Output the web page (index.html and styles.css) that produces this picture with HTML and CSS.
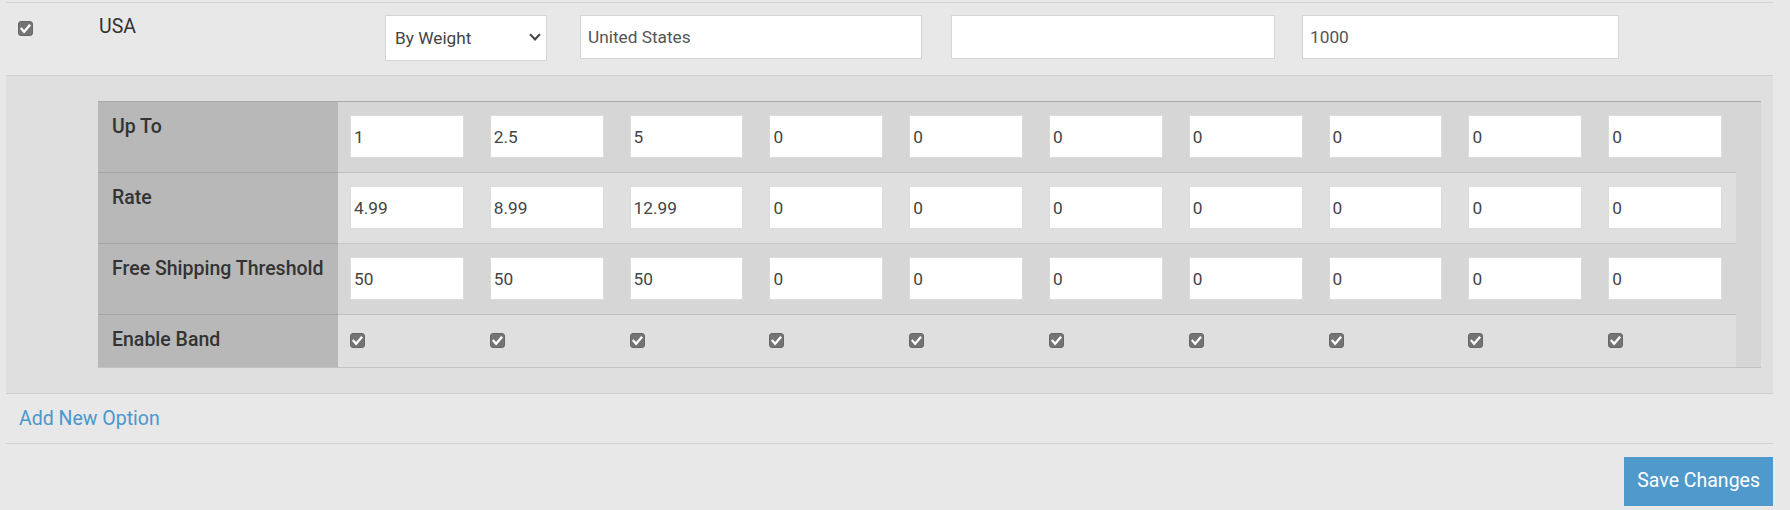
FILE: index.html
```html
<!DOCTYPE html>
<html lang="en">
<head>
<meta charset="utf-8">
<title>Shipping Zones</title>
<link rel="stylesheet" href="styles.css">
</head>
<body>
<div class="wrap">

  <div class="zone-row">
    <div class="zone-cell">
      <svg class="cb cb-top" viewBox="0 0 15 15"><rect x=".5" y=".5" width="14" height="14" rx="2.5"/><path d="M3.6 7.9l2.5 2.9 5.3-6.2"/></svg>
    </div>
    <div class="zone-cell zone-name">USA</div>
    <div class="zone-cell">
      <div class="sel">
        <select><option>By Weight</option><option>By Price</option></select>
      </div>
    </div>
    <div class="zone-cell"><input class="fld fld-name" type="text" value="United States"></div>
    <div class="zone-cell"><input class="fld fld-code" type="text" value=""></div>
    <div class="zone-cell"><input class="fld fld-max" type="text" value="1000"></div>
  </div>

  <div class="bands">
    <div class="band-wrap">
      <table class="band">
        <colgroup><col class="c-head"><col span="10"></colgroup>
        <tr>
          <th>Up To</th>
          <td><input type="text" value="1"></td>
          <td><input type="text" value="2.5"></td>
          <td><input type="text" value="5"></td>
          <td><input type="text" value="0"></td>
          <td><input type="text" value="0"></td>
          <td><input type="text" value="0"></td>
          <td><input type="text" value="0"></td>
          <td><input type="text" value="0"></td>
          <td><input type="text" value="0"></td>
          <td><input type="text" value="0"></td>
        </tr>
        <tr>
          <th>Rate</th>
          <td><input type="text" value="4.99"></td>
          <td><input type="text" value="8.99"></td>
          <td><input type="text" value="12.99"></td>
          <td><input type="text" value="0"></td>
          <td><input type="text" value="0"></td>
          <td><input type="text" value="0"></td>
          <td><input type="text" value="0"></td>
          <td><input type="text" value="0"></td>
          <td><input type="text" value="0"></td>
          <td><input type="text" value="0"></td>
        </tr>
        <tr>
          <th>Free Shipping Threshold</th>
          <td><input type="text" value="50"></td>
          <td><input type="text" value="50"></td>
          <td><input type="text" value="50"></td>
          <td><input type="text" value="0"></td>
          <td><input type="text" value="0"></td>
          <td><input type="text" value="0"></td>
          <td><input type="text" value="0"></td>
          <td><input type="text" value="0"></td>
          <td><input type="text" value="0"></td>
          <td><input type="text" value="0"></td>
        </tr>
        <tr>
          <th>Enable Band</th>
          <td><svg class="cb" viewBox="0 0 15 15"><rect x=".5" y=".5" width="14" height="14" rx="2.5"/><path d="M3.6 7.9l2.5 2.9 5.3-6.2"/></svg></td>
          <td><svg class="cb" viewBox="0 0 15 15"><rect x=".5" y=".5" width="14" height="14" rx="2.5"/><path d="M3.6 7.9l2.5 2.9 5.3-6.2"/></svg></td>
          <td><svg class="cb" viewBox="0 0 15 15"><rect x=".5" y=".5" width="14" height="14" rx="2.5"/><path d="M3.6 7.9l2.5 2.9 5.3-6.2"/></svg></td>
          <td><svg class="cb" viewBox="0 0 15 15"><rect x=".5" y=".5" width="14" height="14" rx="2.5"/><path d="M3.6 7.9l2.5 2.9 5.3-6.2"/></svg></td>
          <td><svg class="cb" viewBox="0 0 15 15"><rect x=".5" y=".5" width="14" height="14" rx="2.5"/><path d="M3.6 7.9l2.5 2.9 5.3-6.2"/></svg></td>
          <td><svg class="cb" viewBox="0 0 15 15"><rect x=".5" y=".5" width="14" height="14" rx="2.5"/><path d="M3.6 7.9l2.5 2.9 5.3-6.2"/></svg></td>
          <td><svg class="cb" viewBox="0 0 15 15"><rect x=".5" y=".5" width="14" height="14" rx="2.5"/><path d="M3.6 7.9l2.5 2.9 5.3-6.2"/></svg></td>
          <td><svg class="cb" viewBox="0 0 15 15"><rect x=".5" y=".5" width="14" height="14" rx="2.5"/><path d="M3.6 7.9l2.5 2.9 5.3-6.2"/></svg></td>
          <td><svg class="cb" viewBox="0 0 15 15"><rect x=".5" y=".5" width="14" height="14" rx="2.5"/><path d="M3.6 7.9l2.5 2.9 5.3-6.2"/></svg></td>
          <td><svg class="cb" viewBox="0 0 15 15"><rect x=".5" y=".5" width="14" height="14" rx="2.5"/><path d="M3.6 7.9l2.5 2.9 5.3-6.2"/></svg></td>
        </tr>
      </table>
    </div>
  </div>

  <div class="more"><a href="#">Add New Option</a></div>

  <div class="actions"><button class="save" type="button">Save Changes</button></div>

</div>
</body>
</html>
```

FILE: styles.css
```css
*{box-sizing:border-box;}
html,body{margin:0;padding:0;}
body{
  background:#e8e8e8;
  font-family:Roboto,"Liberation Sans",Arial,sans-serif;
  font-size:19.5px;
  line-height:24px;
  color:#333;
}
.wrap{ margin:0 17px 0 6px; padding-top:2px; }

/* ---- zone header row ---- */
.zone-row{
  display:grid;
  grid-template-columns:81px 286px 195px 371px 351px 1fr;
  align-items:start;
  border-top:1px solid #d4d4d4;
  border-bottom:1px solid #d0d0d0;
  padding:12px 0 14px;
}
.zone-cell{ padding-left:12px; }
.zone-name{ line-height:24px; }
.cb{ display:block; width:15px; height:15px; }
.cb rect{ fill:#747474; stroke:#666; stroke-width:1; }
.cb path{ fill:none; stroke:#fff; stroke-width:2.3; stroke-linecap:square; }
.cb-top{ margin-top:6px; }

.sel{ position:relative; width:162px; }
.sel select{
  appearance:none; -webkit-appearance:none;
  display:block; width:100%; height:46px; margin:0;
  border:1px solid #d5d5d5; border-radius:0; background:#fff;
  font-family:Roboto,"Liberation Sans",Arial,sans-serif; font-size:17.25px; color:#444;
  padding:0 9px;
}
.sel::after{
  content:''; position:absolute; right:8px; top:16px;
  width:6px; height:6px;
  border-right:2px solid #444; border-bottom:2px solid #444;
  transform:rotate(45deg);
  pointer-events:none;
}
.fld{
  display:block; height:44px; margin:0;
  border:1px solid #d5d5d5; border-radius:0; background:#fff;
  font-family:Roboto,"Liberation Sans",Arial,sans-serif; font-size:17.25px; color:#555;
  padding:0 7px;
}
.fld-name{ width:342px; }
.fld-code{ width:324px; }
.fld-max{ width:317px; }

/* ---- rate bands ---- */
.bands{
  background:#dfdfdf;
  border-bottom:1px solid #cfcfcf;
  padding:25px 12px 25px 92px;
}
.band-wrap{
  background:#d6d6d6;
  border-top:1px solid #a9a9a9;
  border-bottom:1px solid #c2c2c2;
  padding-right:25px;
}
.band{ width:100%; border-collapse:collapse; table-layout:fixed; }
.band .c-head{ width:240px; }
.band tr + tr{ border-top:1px solid rgba(0,0,0,.1); }
.band tr:nth-child(even) td{ background:#dfdfdf; }
.band th{
  background:#b8b8b8; text-align:left; font-weight:500; color:#333;
  padding:13px 14px 15px; vertical-align:top; white-space:nowrap;
}
.band td{ padding:13px 14px 14px 12px; vertical-align:middle; }
.band td input{
  display:block; width:100%; height:43px; margin:0;
  border:1px solid #dcdcdc; border-radius:0; background:#fff;
  font-family:Roboto,"Liberation Sans",Arial,sans-serif; font-size:17.25px; color:#444;
  padding:0 3px;
}

/* ---- footer ---- */
.more{ border-bottom:1px solid #d3d3d3; padding:13px 13px 12px; }
.more a{ color:#4a97cd; text-decoration:none; }
.actions{ display:flex; justify-content:flex-end; padding-top:13px; }
.save{
  background:#4f99cb; color:#fff; border:0; border-radius:0;
  font-family:Roboto,"Liberation Sans",Arial,sans-serif; font-size:19.5px; line-height:24px;
  padding:12px 13px 13px; cursor:pointer;
}
```
